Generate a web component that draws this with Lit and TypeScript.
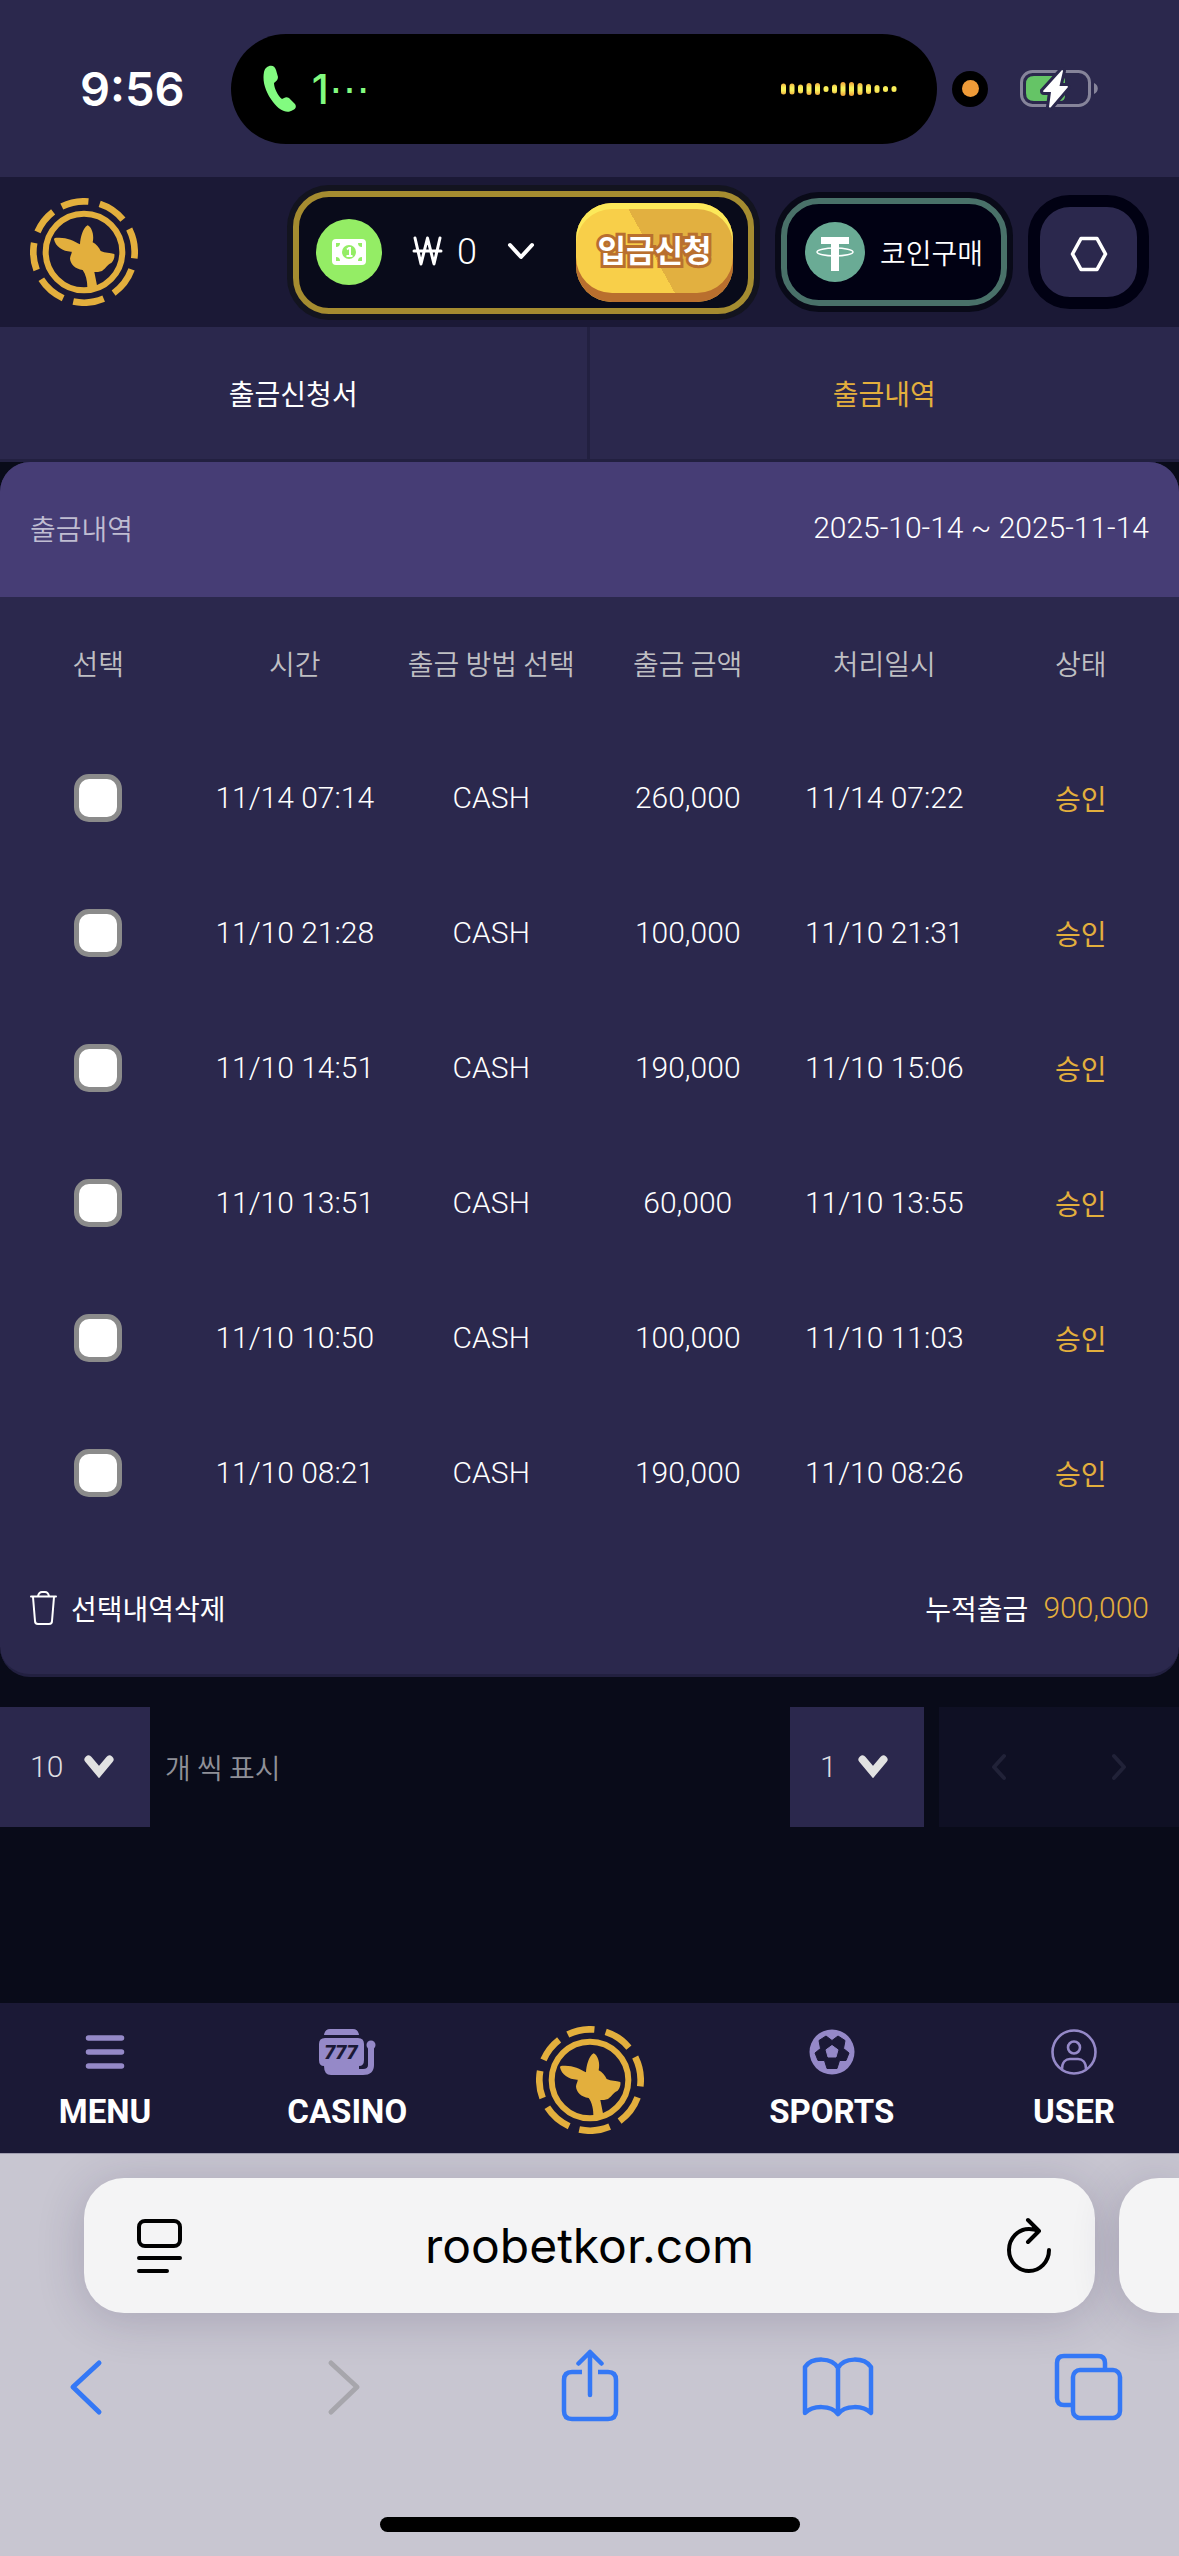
import { LitElement, html, svg, css } from "lit";
import { customElement, property } from "lit/decorators.js";

interface Withdrawal {
  requested: string;
  method: string;
  amount: string;
  processed: string;
  status: string;
}

const WITHDRAWALS: Withdrawal[] = [
  { requested: "11/14 07:14", method: "CASH", amount: "260,000", processed: "11/14 07:22", status: "승인" },
  { requested: "11/10 21:28", method: "CASH", amount: "100,000", processed: "11/10 21:31", status: "승인" },
  { requested: "11/10 14:51", method: "CASH", amount: "190,000", processed: "11/10 15:06", status: "승인" },
  { requested: "11/10 13:51", method: "CASH", amount: "60,000", processed: "11/10 13:55", status: "승인" },
  { requested: "11/10 10:50", method: "CASH", amount: "100,000", processed: "11/10 11:03", status: "승인" },
  { requested: "11/10 08:21", method: "CASH", amount: "190,000", processed: "11/10 08:26", status: "승인" },
];

const COLUMNS = ["선택", "시간", "출금 방법 선택", "출금 금액", "처리일시", "상태"];

const WAVE = [11, 11, 9, 12, 12, 6, 9, 14, 14, 12, 10, 8, 6, 6];

const base = css`
  *,
  *::before,
  *::after {
    box-sizing: border-box;
  }
  svg {
    display: block;
    flex: none;
  }
  button,
  input,
  select {
    margin: 0;
    padding: 0;
    border: 0;
    background: none;
    color: inherit;
    font: inherit;
  }
  a {
    color: inherit;
    text-decoration: none;
  }
`;

/* Round brand mark: a kangaroo head inside a casino chip. */
@customElement("brand-mark")
export class BrandMark extends LitElement {
  static styles = css`
    :host {
      display: block;
      width: 108px;
      height: 108px;
    }
    svg {
      display: block;
      width: 100%;
      height: 100%;
    }
  `;
  render() {
    return html`<svg viewBox="0 0 324 324" fill="none" aria-hidden="true">
      <circle
        cx="162"
        cy="162"
        r="152"
        stroke="#e3af3d"
        stroke-width="20"
        pathLength="360"
        stroke-dasharray="31 13 32 13 34 13 34 13 35 12 33 12 31 13 29 12"
        transform="rotate(-116 162 162)"
      />
      <circle cx="162" cy="162" r="115" stroke="#e3af3d" stroke-width="18" />
      <path
        fill="#e3af3d"
        d="M72 124C72 119 76 119 84 119C110 118 132 128 150 139C151 120 158 90 173 82C186 88 193 112 188 133C198 138 208 149 212 159C226 166 240 164 253 168C255 178 250 190 244 195C234 198 228 210 216 219C208 222 200 222 193 222L203 272L172 276C173 250 168 230 158 216C136 214 120 198 120 181C121 172 126 166 125 161C100 162 76 146 72 124Z"
      />
    </svg>`;
  }
}

@customElement("status-bar")
export class StatusBar extends LitElement {
  static styles = [
    base,
    css`
      :host {
        display: flex;
        align-items: center;
        height: 177px;
        padding: 0 81px 0 80px;
        background: #2b284d;
      }
      .time {
        font: 600 47px/60px Inter, sans-serif;
        color: #fff;
      }
      .island {
        flex: 1;
        display: flex;
        align-items: center;
        justify-content: space-between;
        height: 110px;
        margin: 0 15px 0 46px;
        padding: 0 39px 0 32px;
        border-radius: 55px;
        background: #000;
      }
      .call {
        display: flex;
        align-items: center;
        gap: 15px;
        font: 500 41px/50px Inter, sans-serif;
        color: #82fb80;
      }
      .recording {
        display: grid;
        place-items: center;
        width: 36px;
        height: 36px;
        margin-right: 32px;
        border-radius: 50%;
        background: #000;
      }
      .recording::before {
        content: "";
        width: 17px;
        height: 17px;
        border-radius: 50%;
        background: #ef9b38;
      }
    `,
  ];
  render() {
    return html`
      <span class="time">9:56</span>
      <div class="island">
        <span class="call">
          <svg width="34" height="48" viewBox="0 0 34 48" aria-hidden="true">
            <path
              fill="#82fb80"
              d="M6 1C9 0 12 1 13 5L15 12C15 15 13 16 11 18C11 23 15 31 19 34C21 33 23 31 26 33L32 39C34 42 32 44 30 45C24 49 17 46 10 37C3 28-1 17 1 7C2 3 4 2 6 1Z"
            />
          </svg>
          <span>1⋯</span>
        </span>
        <svg width="118" height="18" viewBox="0 0 118 18" aria-hidden="true">
          <defs>
            <linearGradient id="wave" gradientUnits="userSpaceOnUse" x1="0" y1="2" x2="0" y2="16">
              <stop offset="0" stop-color="#ef9b38" />
              <stop offset="0.4" stop-color="#f8f05a" />
              <stop offset="0.6" stop-color="#f8f05a" />
              <stop offset="1" stop-color="#ef9b38" />
            </linearGradient>
          </defs>
          ${WAVE.map(
            (h, i) => svg`<rect x=${1 + i * 8.5} y=${9 - h / 2} width="5" height=${h} rx="2.5" fill="url(#wave)" />`
          )}
        </svg>
      </div>
      <span class="recording"></span>
      <svg width="78" height="44" viewBox="0 0 78 44" aria-hidden="true">
        <rect x="1.5" y="4.5" width="68" height="34" rx="11" fill="none" stroke="#86849a" stroke-width="3" />
        <path d="M74 16C79 18 79 25 74 27Z" fill="#86849a" />
        <path d="M14 9H40Q45 9 45 14V29Q45 34 40 34H14Q6 34 6 26V17Q6 9 14 9Z" fill="#65c466" />
        <path
          d="M42 3L23 24Q23 25 24 25H31L29 40Q30 41 31 40L48 20Q48 19 47 19H39.5L43 4Q43 3 42 3Z"
          fill="#fff"
          stroke="#2b284d"
          stroke-width="6"
          paint-order="stroke"
        />
      </svg>
    `;
  }
}

@customElement("site-header")
export class SiteHeader extends LitElement {
  static styles = [
    base,
    css`
      :host {
        display: flex;
        align-items: center;
        gap: 15px;
        height: 150px;
        padding: 0 30px;
        background: #1b1936;
        color: #fff;
      }
      .home {
        margin-right: auto;
      }
      .ring {
        padding: 6px;
        border-radius: 42px;
        background: #13141f;
      }
      .balance {
        display: flex;
        align-items: center;
        height: 123px;
        padding: 0 15px 0 17px;
        border: 6px solid #a58c30;
        border-radius: 36px;
        background: #090b1a;
      }
      .cash {
        display: grid;
        place-items: center;
        width: 66px;
        height: 66px;
        border-radius: 50%;
        background: #94ed65;
      }
      .currency {
        display: flex;
        align-items: center;
        gap: 14px;
        padding: 0 40px 0 30px;
        font: 300 36px/44px Roboto, sans-serif;
      }
      .currency svg:last-child {
        margin-left: 15px;
      }
      .deposit {
        width: 157px;
        height: 99px;
        padding-bottom: 7px;
        border-radius: 36px;
        background: linear-gradient(61deg, #f8cf49 49%, #e2b040 49%);
        box-shadow: inset 0 6px #fce95a, inset 0 -9px #b96f2e;
        font: 700 31px/40px "Noto Sans CJK KR", sans-serif;
        color: #fff;
        -webkit-text-stroke: 6px #b96f2e;
        paint-order: stroke fill;
      }
      .coin {
        display: flex;
        align-items: center;
        gap: 15px;
        height: 108px;
        padding: 0 18px;
        border: 6px solid #497169;
        border-radius: 38px;
        background: #010113;
        font: 350 28px/40px "Noto Sans CJK KR", sans-serif;
      }
      .coin-ring {
        border-radius: 44px;
        background: #090a18;
      }
      .settings {
        display: grid;
        place-items: center;
        width: 121px;
        height: 114px;
        padding-top: 4px;
        border: 12px solid #010113;
        border-radius: 42px;
        background: #2b284d;
      }
    `,
  ];
  render() {
    return html`
      <a class="home" href="#home" aria-label="ROOBET"><brand-mark></brand-mark></a>
      <div class="ring">
        <div class="balance">
          <span class="cash">
            <svg width="34" height="26" viewBox="0 0 34 26" aria-hidden="true">
              <rect width="34" height="26" rx="4" fill="#fff" />
              <circle cx="17" cy="13" r="7" fill="#94ed65" />
              <path d="M15 10.5L17 9H18V16.5M14.5 17H20.500" fill="none" stroke="#fff" stroke-width="2" />
              <path d="M4 8V4H8Q8 8 4 8ZM30 8V4H26Q26 8 30 8ZM4 18V22H8Q8 18 4 18ZM30 18V22H26Q26 18 30 18Z" fill="#94ed65" />
            </svg>
          </span>
          <button class="currency" aria-label="통화 선택">
            <svg width="31" height="32" viewBox="0 0 31 32" fill="none" stroke="#fff" stroke-width="3" stroke-linecap="round" stroke-linejoin="round" aria-hidden="true">
              <path d="M3 2L9 28L15.5 2L22 28L28 2M2 15H29" />
            </svg>
            <span>0</span>
            <svg width="30" height="20" viewBox="0 0 30 20" fill="none" stroke="#fff" stroke-width="4" stroke-linecap="round" stroke-linejoin="round" aria-hidden="true">
              <path d="M4 3L15 15L26 3" />
            </svg>
          </button>
          <button class="deposit">입금신청</button>
        </div>
      </div>
      <div class="ring coin-ring">
        <button class="coin">
          <svg width="60" height="60" viewBox="0 0 60 60" aria-hidden="true">
            <circle cx="30" cy="30" r="30" fill="#6aab95" />
            <path d="M16 15H44V22H34V49H26V22H16Z" fill="#fff" />
            <ellipse cx="30" cy="30" rx="18" ry="4" fill="none" stroke="#fff" stroke-width="1.5" />
            <path d="M27 27H33V31Q30 32 27 31Z" fill="#fff" />
          </svg>
          <span>코인구매</span>
        </button>
      </div>
      <button class="settings" aria-label="설정">
        <svg width="38" height="36" viewBox="0 0 38 36" fill="none" stroke="#fff" stroke-width="3.6" stroke-linejoin="round" aria-hidden="true">
          <path d="M11 2.5H27L35.5 18L27 33.5H11L2.5 18Z" />
        </svg>
      </button>
    `;
  }
}

@customElement("withdrawal-history")
export class WithdrawalHistory extends LitElement {
  @property({ attribute: false }) rows: Withdrawal[] = WITHDRAWALS;

  static styles = [
    base,
    css`
      :host {
        display: block;
        font: 300 30px/40px Roboto, "Noto Sans CJK KR", sans-serif;
        color: #fff;
      }
      .ko,
      th {
        font: 350 28px/40px "Noto Sans CJK KR", sans-serif;
      }
      .strong {
        font-weight: 400;
      }
      .tabs {
        display: grid;
        grid-template-columns: 1fr 1fr;
        height: 135px;
        border-bottom: 3px solid #222040;
        background: #2b284d;
      }
      .tab {
        display: grid;
        place-items: center;
      }
      .tab:first-child {
        border-right: 3px solid #222040;
      }
      .tab[aria-current] {
        color: #e3af3d;
      }
      .panel {
        overflow: hidden;
        border-bottom: 3px solid #222040;
        border-radius: 30px;
        background: #2b284d;
      }
      .bar {
        display: flex;
        align-items: center;
        justify-content: space-between;
        height: 132px;
        padding: 0 30px;
      }
      .heading {
        height: 135px;
        padding-bottom: 3px;
        background: #463d75;
      }
      .heading h2 {
        margin: 0;
        color: #c0bdd2;
      }
      table {
        width: 100%;
        table-layout: fixed;
        border-collapse: collapse;
      }
      th,
      td {
        height: 135px;
        padding: 0 0 3px;
        text-align: center;
        white-space: nowrap;
      }
      th {
        color: #bfbfc3;
      }
      .check {
        display: block;
        width: 48px;
        height: 48px;
        margin: 0 auto;
        border: 5px solid #8b8b8b;
        border-radius: 15px;
        background: #fff;
        appearance: none;
      }
      .check:checked {
        background: #e3af3d;
      }
      .gold {
        color: #e3af3d;
      }
      .delete {
        display: flex;
        align-items: center;
        gap: 14px;
      }
      .total {
        display: flex;
        align-items: center;
        gap: 15px;
      }
      .pager {
        display: flex;
        align-items: center;
        gap: 15px;
        padding: 30px 0;
      }
      .picker {
        display: grid;
        align-items: center;
        height: 120px;
        background: #2b284d;
        color: #dedee2;
      }
      .picker select,
      .picker svg {
        grid-area: 1 / 1;
      }
      .picker select {
        width: 150px;
        height: 120px;
        padding-left: 30px;
        appearance: none;
      }
      .picker .page {
        width: 134px;
      }
      .picker svg {
        justify-self: end;
        margin-right: 36px;
        pointer-events: none;
      }
      .hint {
        margin-right: auto;
        color: #8f9098;
      }
      .steps {
        display: flex;
        background: #0f1024;
      }
      .steps button {
        display: grid;
        place-items: center;
        width: 120px;
        height: 120px;
      }
    `,
  ];

  private chevron() {
    return html`<svg width="30" height="24" viewBox="0 0 30 24" fill="none" stroke="#e2e2e2" stroke-width="8" stroke-linecap="round" aria-hidden="true">
      <path d="M4.5 4.5L15 17L25.5 4.5" />
    </svg>`;
  }

  render() {
    return html`
      <nav class="tabs">
        <a class="tab ko strong" href="#request">출금신청서</a>
        <a class="tab ko strong" href="#history" aria-current="page">출금내역</a>
      </nav>
      <section class="panel">
        <header class="bar heading">
          <h2 class="ko">출금내역</h2>
          <span>2025-10-14 ~ 2025-11-14</span>
        </header>
        <table>
          <thead>
            <tr>
              ${COLUMNS.map((c) => html`<th scope="col">${c}</th>`)}
            </tr>
          </thead>
          <tbody>
            ${this.rows.map(
              (r) => html`<tr>
                <td><input class="check" type="checkbox" aria-label="${r.requested} 선택" /></td>
                <td>${r.requested}</td>
                <td>${r.method}</td>
                <td>${r.amount}</td>
                <td>${r.processed}</td>
                <td class="ko strong gold">${r.status}</td>
              </tr>`
            )}
          </tbody>
        </table>
        <footer class="bar">
          <button class="delete ko strong">
            <svg width="27" height="36" viewBox="0 0 27 36" fill="none" stroke="#fff" stroke-width="2" stroke-linecap="round" stroke-linejoin="round" aria-hidden="true">
              <path d="M1 6.5H26M3 7L5 31Q5 34 8 34H19Q22 34 22 31L24 7M8 6Q9 2 12 2H15Q18 2 19 6" />
            </svg>
            선택내역삭제
          </button>
          <span class="total"><span class="ko strong">누적출금</span><span class="gold">900,000</span></span>
        </footer>
      </section>
      <div class="pager">
        <span class="picker">
          <select id="size" aria-label="표시 개수">
            <option>10</option>
            <option>20</option>
          </select>
          ${this.chevron()}
        </span>
        <label class="hint ko" for="size">개 씩 표시</label>
        <span class="picker">
          <select class="page" aria-label="페이지">
            <option>1</option>
          </select>
          ${this.chevron()}
        </span>
        <span class="steps">
          <button aria-label="이전" disabled>
            <svg width="16" height="28" viewBox="0 0 16 28" fill="none" stroke="#212238" stroke-width="4" stroke-linecap="round" stroke-linejoin="round" aria-hidden="true">
              <path d="M13 3L3 14L13 25" />
            </svg>
          </button>
          <button aria-label="다음" disabled>
            <svg width="16" height="28" viewBox="0 0 16 28" fill="none" stroke="#212238" stroke-width="4" stroke-linecap="round" stroke-linejoin="round" aria-hidden="true">
              <path d="M3 3L13 14L3 25" />
            </svg>
          </button>
        </span>
      </div>
    `;
  }
}

@customElement("bottom-nav")
export class BottomNav extends LitElement {
  static styles = [
    base,
    css`
      :host {
        display: flex;
        align-items: center;
        justify-content: space-between;
        height: 150px;
        padding: 0 30px;
        background: #1b1936;
        font: 700 33px/40px Roboto, sans-serif;
        color: #fff;
      }
      .item {
        display: flex;
        flex-direction: column;
        align-items: center;
        gap: 17px;
        width: 150px;
        padding-top: 4px;
      }
    `,
  ];
  render() {
    return html`
      <a class="item" href="#menu">
        <svg width="40" height="46" viewBox="0 0 40 46" stroke="#9589c8" stroke-width="5.5" stroke-linecap="round" aria-hidden="true">
          <path d="M3.5 9H36.5M3.5 23H36.5M3.5 37H36.5" />
        </svg>
        MENU
      </a>
      <a class="item" href="#casino">
        <svg width="57" height="46" viewBox="0 0 57 46" fill="#9589c8" aria-hidden="true">
          <path d="M5 6Q6 0 11 0H34Q39 0 40 6Z" />
          <path d="M6 9H39Q45 9 45 15V31Q45 37 40 37V46H12Q5 46 5 37Q0 37 0 31V15Q0 9 6 9Z" />
          <path d="M36 43H44Q52 43 52 36V16" fill="none" stroke="#9589c8" stroke-width="6" />
          <circle cx="52" cy="16" r="4.5" />
          <text x="22" y="30" text-anchor="middle" font-family="Roboto, sans-serif" font-size="20" font-weight="900" font-style="italic" fill="#1b1936">777</text>
        </svg>
        CASINO
      </a>
      <a class="item" href="#home" aria-label="홈"><brand-mark></brand-mark></a>
      <a class="item" href="#sports">
        <svg width="46" height="46" viewBox="0 0 46 46" aria-hidden="true">
          <circle cx="23" cy="23" r="22.5" fill="#9589c8" />
          <path
            d="M17 7L23 11.5L29 7L36 11.5L34.5 19.5L40 24L37 31.5H30.5L28 39.5H18L15.500 31.500H9L6 24L11.500 19.500L10 11.500Z"
            fill="#1b1936"
            stroke="#1b1936"
            stroke-width="1"
            stroke-linejoin="round"
          />
          <path d="M23 16.500L29 20.800L27 28H19L17 20.800Z" fill="#9589c8" stroke="#9589c8" stroke-linejoin="round" />
        </svg>
        SPORTS
      </a>
      <a class="item" href="#user">
        <svg width="46" height="46" viewBox="0 0 46 46" fill="none" stroke="#9589c8" stroke-width="2.6" aria-hidden="true">
          <circle cx="23" cy="23" r="21.500" />
          <circle cx="23" cy="18.500" r="6" />
          <path d="M11 40C11 33 15 30 19 30H27C31 30 35 33 35 40" />
        </svg>
        USER
      </a>
    `;
  }
}

@customElement("browser-chrome")
export class BrowserChrome extends LitElement {
  static styles = [
    base,
    css`
      :host {
        display: flex;
        flex-direction: column;
        height: 402px;
        overflow: hidden;
        border-top: 1px solid #a09db0;
        background: #c8c6d1;
        color: #000;
      }
      .row {
        display: flex;
        gap: 24px;
        padding: 24px 0 36px 84px;
      }
      .address,
      .next {
        height: 135px;
        background: #f4f4f5;
        box-shadow: 0 6px 48px rgba(40, 30, 70, 0.2);
      }
      .address {
        flex: 1;
        display: flex;
        align-items: center;
        min-width: 0;
        padding: 0 42px 0 53px;
        border-radius: 40px;
      }
      .address input {
        flex: 1;
        min-width: 0;
        height: 100px;
        padding-right: 9px;
        font: 400 48px/60px Inter, sans-serif;
        text-align: center;
      }
      .next {
        width: 60px;
        border-radius: 40px 0 0 40px;
      }
      .tools {
        display: flex;
        justify-content: space-between;
        padding: 0 56px;
      }
      .indicator {
        width: 420px;
        height: 15px;
        margin: auto auto 24px;
        border-radius: 8px;
        background: #000;
      }
    `,
  ];
  render() {
    return html`
      <div class="row">
        <form class="address">
          <button type="button" aria-label="페이지 설정">
            <svg width="46" height="56" viewBox="0 0 46 56" fill="none" stroke="#000" stroke-width="4" stroke-linecap="round" aria-hidden="true">
              <rect x="2" y="3" width="41" height="25" rx="6" />
              <path d="M2 40H43M2 53H30" />
            </svg>
          </button>
          <input type="text" value="roobetkor.com" aria-label="주소" />
          <button type="button" aria-label="새로고침">
            <svg width="48" height="58" viewBox="0 0 48 58" fill="none" stroke="#000" stroke-width="4" stroke-linecap="round" stroke-linejoin="round" aria-hidden="true">
              <path d="M44 33A20 21 0 1 1 24 12Q29 12 34 14M23 3L34 14L23 25" />
            </svg>
          </button>
        </form>
        <div class="next"></div>
      </div>
      <div class="tools">
        <button aria-label="뒤로">
          <svg width="72" height="74" viewBox="0 0 72 74" fill="none" stroke="#3478f6" stroke-width="5" stroke-linecap="round" stroke-linejoin="round" aria-hidden="true">
            <path d="M43 14L17 38L43 63" />
          </svg>
        </button>
        <button aria-label="앞으로" disabled>
          <svg width="72" height="74" viewBox="0 0 72 74" fill="none" stroke="#a7a6ac" stroke-width="5" stroke-linecap="round" stroke-linejoin="round" aria-hidden="true">
            <path d="M26 14L52 38L26 63" />
          </svg>
        </button>
        <button aria-label="공유">
          <svg width="72" height="74" viewBox="0 0 72 74" fill="none" stroke="#3478f6" stroke-width="4.500" stroke-linejoin="round" aria-hidden="true">
            <path d="M28 23H18Q10 23 10 31V62Q10 70 18 70H54Q62 70 62 62V31Q62 23 54 23H44" />
            <path d="M36 46V3M24.500 14.500L36 3L47.500 14.500" stroke-linecap="round" />
          </svg>
        </button>
        <button aria-label="책갈피">
          <svg width="72" height="74" viewBox="0 0 72 74" fill="none" stroke="#3478f6" stroke-width="4.500" stroke-linecap="round" stroke-linejoin="round" aria-hidden="true">
            <path d="M36 19V65M36 19C30 8 10 8 3 18V64C11 56 29 56 36 65C43 56 61 56 69 64V18C62 8 42 8 36 19" />
          </svg>
        </button>
        <button aria-label="탭">
          <svg width="72" height="74" viewBox="0 0 72 74" fill="none" stroke="#3478f6" stroke-width="4.500" stroke-linejoin="round" aria-hidden="true">
            <path d="M20 56H13Q6 56 6 49V14Q6 7 13 7H47Q54 7 54 14V21" />
            <rect x="22" y="21" width="47" height="48" rx="7" />
          </svg>
        </button>
      </div>
      <div class="indicator"></div>
    `;
  }
}

@customElement("app-root")
export class AppRoot extends LitElement {
  static styles = css`
    :host {
      display: flex;
      flex-direction: column;
      min-height: 100vh;
      background: #090b19;
    }
    main {
      flex: 1;
    }
  `;
  render() {
    return html`
      <status-bar></status-bar>
      <site-header></site-header>
      <main><withdrawal-history></withdrawal-history></main>
      <bottom-nav></bottom-nav>
      <browser-chrome></browser-chrome>
    `;
  }
}
